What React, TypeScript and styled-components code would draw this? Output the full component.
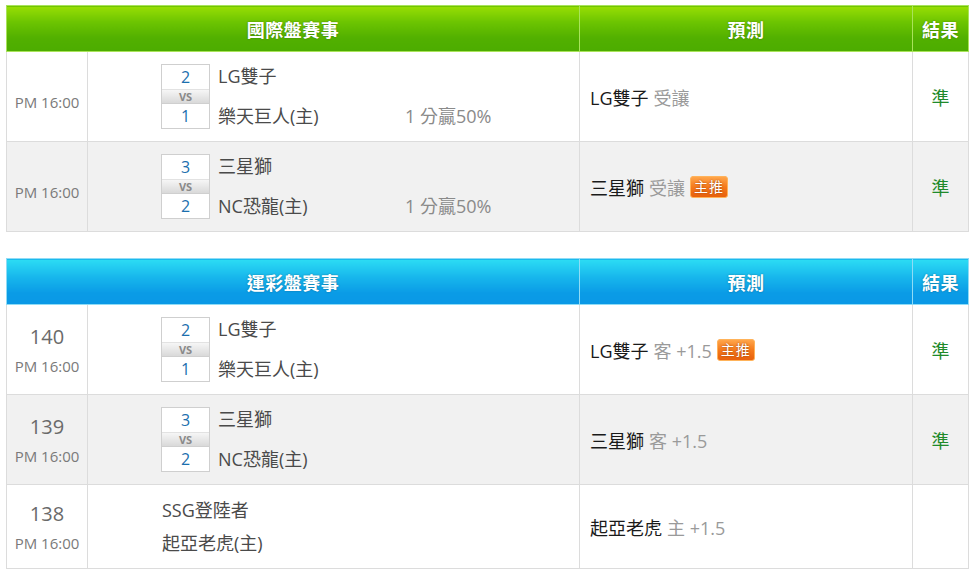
import styled, { createGlobalStyle, css } from "styled-components";

const GlobalStyle = createGlobalStyle`
  body {
    margin: 0;
    padding: 5px 0 0 6px;
    background: #fff;
    font-family: "Open Sans", "Noto Sans CJK TC", sans-serif;
  }
`;

type Tone = "green" | "blue";

const tones = {
  green: {
    bg: "linear-gradient(to bottom, #98de04 0%, #6cc401 35%, #52b000 70%, #4cac00 100%)",
    line: "#a9e35a",
  },
  blue: {
    bg: "linear-gradient(to bottom, #2cdcf4 0%, #17b6ec 40%, #0a9be6 75%, #0a98e6 100%)",
    line: "#8fdcf6",
  },
};

const Table = styled.table`
  border-collapse: collapse;
  width: 962px;
  table-layout: fixed;
  & + & {
    margin-top: 26px;
  }
`;

const HeadCell = styled.th<{ $tone: Tone }>(
  ({ $tone }) => css`
    height: 45px;
    padding: 0;
    background: ${tones[$tone].bg};
    border: 1px solid ${tones[$tone].line};
    color: #fff;
    font-size: 18px;
    font-weight: bold;
    text-align: center;
    text-shadow: 0 0 2px rgba(0, 0, 0, 0.35);
    letter-spacing: 0.5px;
  `
);

const Row = styled.tr<{ $alt?: boolean }>(
  ({ $alt }) => css`
    background: ${$alt ? "#f1f1f1" : "#fff"};
  `
);

const Cell = styled.td<{ $short?: boolean }>(
  ({ $short }) => css`
    height: ${$short ? "83px" : "89px"};
    padding: 0;
    border: 1px solid #dcdcdc;
    vertical-align: middle;
  `
);

const TimeCell = styled(Cell)`
  text-align: center;
  color: #7a7a7a;
  font-size: 15px;
`;

const GameNo = styled.div`
  font-size: 20px;
  color: #6a6a6a;
  line-height: 24px;
  margin-bottom: 8px;
`;

const TimeText = styled.div<{ $shift?: boolean }>(
  ({ $shift }) => css`
    line-height: 18px;
    padding-top: ${$shift ? "10px" : "0"};
  `
);

const Match = styled.div`
  display: flex;
  align-items: stretch;
  padding-left: 73px;
`;

const ScoreBox = styled.div`
  display: flex;
  flex-direction: column;
  width: 47px;
  border: 1px solid #cfcfcf;
  background: #fff;
  margin-right: 8px;
`;

const Score = styled.div`
  height: 24px;
  line-height: 24px;
  text-align: center;
  color: #1b6fae;
  font-size: 16px;
`;

const Vs = styled.div`
  height: 13px;
  line-height: 13px;
  text-align: center;
  font-size: 11px;
  font-weight: bold;
  color: #8a8a8a;
  background: linear-gradient(to bottom, #f6f6f6, #d9d9d9);
  border-top: 1px solid #e2e2e2;
  border-bottom: 1px solid #cfcfcf;
`;

const Teams = styled.div`
  display: flex;
  flex-direction: column;
  justify-content: space-between;
  width: 187px;
  font-size: 18px;
  color: #4a4a4a;
  line-height: 25px;
`;

const PlainTeams = styled.div`
  font-size: 18px;
  color: #4a4a4a;
  line-height: 33px;
  padding-left: 1px;
`;

const Handicap = styled.div`
  align-self: flex-end;
  font-size: 18px;
  line-height: 25px;
  color: #8a8a8a;
`;

const PickCell = styled(Cell)`
  padding-left: 10px;
  font-size: 18px;
  color: #1a1a1a;
`;

const Muted = styled.span`
  color: #9a9a9a;
  margin-left: 5px;
`;

const Badge = styled.span`
  display: inline-block;
  margin-left: 5px;
  padding: 0 3px;
  height: 20px;
  line-height: 20px;
  font-size: 14px;
  color: #fff;
  vertical-align: 3px;
  border-radius: 3px;
  border: 1px solid #ffb35a;
  background: linear-gradient(to bottom, #ffa54a 0%, #f57a1c 50%, #e8600c 100%);
  text-shadow: 0 0 2px rgba(120, 40, 0, 0.8);
  letter-spacing: 1px;
`;

const ResultCell = styled(Cell)`
  text-align: center;
  color: #1f8a2a;
  font-size: 18px;
`;

interface Game {
  no?: string;
  home: [string, string];
  score?: [number, number];
  handicap?: string;
  pick: string;
  pickNote: string;
  hot?: boolean;
  result?: string;
}

const intl: Game[] = [
  {
    home: ["LG雙子", "樂天巨人(主)"],
    score: [2, 1],
    handicap: "1 分贏50%",
    pick: "LG雙子",
    pickNote: "受讓",
    result: "準",
  },
  {
    home: ["三星獅", "NC恐龍(主)"],
    score: [3, 2],
    handicap: "1 分贏50%",
    pick: "三星獅",
    pickNote: "受讓",
    hot: true,
    result: "準",
  },
];

const lottery: Game[] = [
  {
    no: "140",
    home: ["LG雙子", "樂天巨人(主)"],
    score: [2, 1],
    pick: "LG雙子",
    pickNote: "客 +1.5",
    hot: true,
    result: "準",
  },
  {
    no: "139",
    home: ["三星獅", "NC恐龍(主)"],
    score: [3, 2],
    pick: "三星獅",
    pickNote: "客 +1.5",
    result: "準",
  },
  {
    no: "138",
    home: ["SSG登陸者", "起亞老虎(主)"],
    pick: "起亞老虎",
    pickNote: "主 +1.5",
  },
];

function GameRow({ game, alt }: { game: Game; alt: boolean }) {
  const short = !game.score;
  return (
    <Row $alt={alt}>
      <TimeCell $short={short}>
        {game.no && <GameNo>{game.no}</GameNo>}
        <TimeText $shift={!game.no}>PM 16:00</TimeText>
      </TimeCell>
      <Cell $short={short}>
        {game.score ? (
          <Match>
            <ScoreBox>
              <Score>{game.score[0]}</Score>
              <Vs>VS</Vs>
              <Score>{game.score[1]}</Score>
            </ScoreBox>
            <Teams>
              <div>{game.home[0]}</div>
              <div>{game.home[1]}</div>
            </Teams>
            {game.handicap && <Handicap>{game.handicap}</Handicap>}
          </Match>
        ) : (
          <Match>
            <PlainTeams>
              <div>{game.home[0]}</div>
              <div>{game.home[1]}</div>
            </PlainTeams>
          </Match>
        )}
      </Cell>
      <PickCell $short={short}>
        {game.pick}
        <Muted>{game.pickNote}</Muted>
        {game.hot && <Badge>主推</Badge>}
      </PickCell>
      <ResultCell $short={short}>{game.result}</ResultCell>
    </Row>
  );
}

function Board({ title, tone, games }: { title: string; tone: Tone; games: Game[] }) {
  return (
    <Table>
      <colgroup>
        <col style={{ width: 81 }} />
        <col style={{ width: 492 }} />
        <col style={{ width: 333 }} />
        <col style={{ width: 56 }} />
      </colgroup>
      <thead>
        <tr>
          <HeadCell $tone={tone} colSpan={2}>
            {title}
          </HeadCell>
          <HeadCell $tone={tone}>預測</HeadCell>
          <HeadCell $tone={tone}>結果</HeadCell>
        </tr>
      </thead>
      <tbody>
        {games.map((g, i) => (
          <GameRow key={i} game={g} alt={i % 2 === 1} />
        ))}
      </tbody>
    </Table>
  );
}

export default function App() {
  return (
    <>
      <GlobalStyle />
      <Board title="國際盤賽事" tone="green" games={intl} />
      <Board title="運彩盤賽事" tone="blue" games={lottery} />
    </>
  );
}
